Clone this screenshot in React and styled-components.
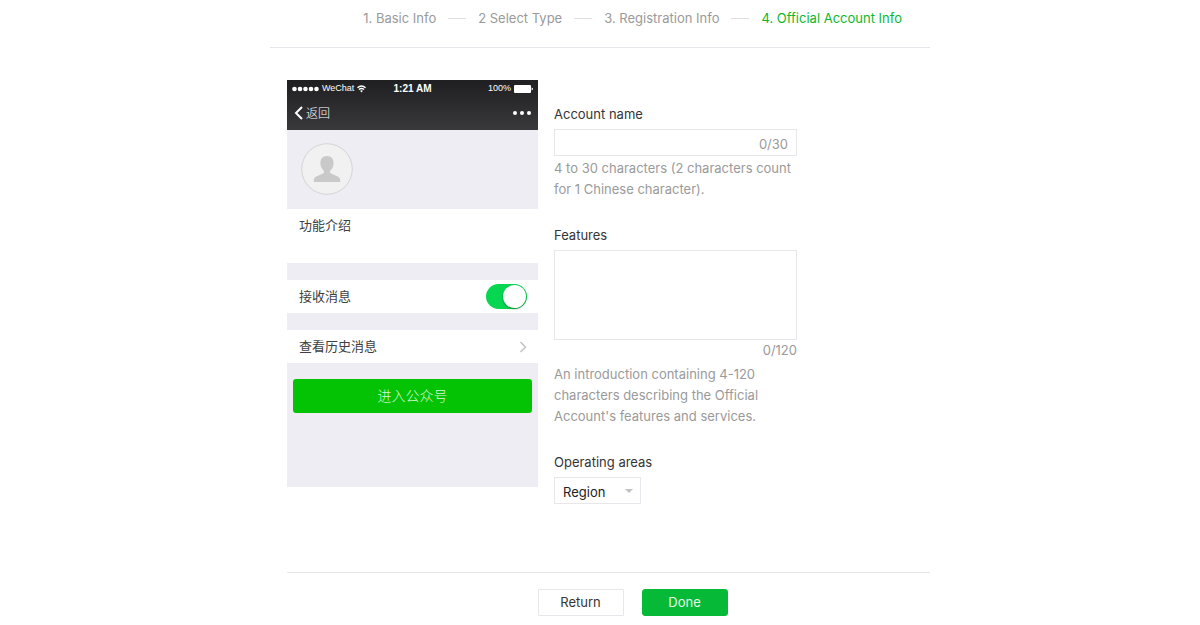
import React, { useState } from 'react';
import styled, { createGlobalStyle } from 'styled-components';

const GlobalStyle = createGlobalStyle`
	* {
		box-sizing: border-box;
	}

	body {
		margin: 0;
		background: #fff;
		color: #353535;
		font-family: Inter, "Noto Sans CJK SC", sans-serif;
		font-size: 13px;
		line-height: 21px;
	}

	button, input, textarea, select {
		font: inherit;
		color: inherit;
	}
`;

const Page = styled.main`
	max-width: 660px;
	margin: 0 auto;
`;

const Steps = styled.ol`
	display: flex;
	align-items: center;
	justify-content: flex-end;
	margin: 0;
	padding: 8px 28px 18px 0;
	border-bottom: 1px solid #e7e7eb;
	list-style: none;

	& li + li::before {
		content: '';
		width: 18px;
		margin: 0 12px;
		border-top: 1px solid #e0e0e0;
	}
`;

const Step = styled.li`
	display: flex;
	align-items: center;
	white-space: nowrap;
	color: ${props => (props.$active ? '#0cb72c' : '#9a9a9a')};
`;

const Content = styled.div`
	display: flex;
	align-items: flex-start;
	gap: 16px;
	padding: 32px 0 68px 17px;
`;

const Phone = styled.section`
	flex: none;
	width: 251px;
	padding-bottom: 74px;
	background: #eeedf4;
	color: #404040;
`;

const PhoneTop = styled.header`
	height: 50px;
	padding: 0 5px;
	background: linear-gradient(#1f1f21, #39393b);
	color: #fff;
`;

const StatusBar = styled.div`
	display: grid;
	grid-template-columns: 1fr auto 1fr;
	align-items: center;
	height: 17px;
	font-family: "Liberation Sans", Arial, sans-serif;
	font-size: 9px;
	line-height: 17px;
`;

const StatusGroup = styled.span`
	display: flex;
	align-items: center;
	justify-content: ${props => (props.$end ? 'flex-end' : 'flex-start')};
	gap: 3px;
`;

const Time = styled.strong`
	font-size: 10px;
`;

const NavBar = styled.div`
	display: flex;
	align-items: center;
	justify-content: space-between;
	height: 32px;
`;

const PlainButton = styled.button`
	display: flex;
	align-items: center;
	gap: 3px;
	padding: 0 2px;
	border: none;
	background: none;
	font-size: 12px;
	font-weight: 300;
`;

const Profile = styled.div`
	padding: 13px 14px 14px;

	& svg {
		display: block;
	}
`;

const Intro = styled.div`
	height: 54px;
	padding: 6px 12px;
	background: #fff;
`;

const PhoneRow = styled.label`
	display: flex;
	align-items: center;
	justify-content: space-between;
	height: 33px;
	margin-top: 17px;
	padding: 0 11px 0 12px;
	background: #fff;
`;

const Switch = styled.input`
	appearance: none;
	display: flex;
	justify-content: ${props => (props.checked ? 'flex-end' : 'flex-start')};
	width: 41px;
	height: 25px;
	margin: 0;
	padding: 1px;
	border-radius: 13px;
	background: ${props => (props.checked ? '#06d650' : '#ddd')};

	&::before {
		content: '';
		width: 23px;
		height: 23px;
		border-radius: 50%;
		background: #fff;
		box-shadow: 0 1px 2px rgba(0, 0, 0, 0.35);
	}
`;

const EnterButton = styled.button`
	display: block;
	width: calc(100% - 12px);
	height: 34px;
	margin: 16px 6px 0;
	padding: 0 0 2px;
	border: none;
	border-radius: 3px;
	background: #04c304;
	color: #d9f7d9;
	font-size: 14px;
	font-weight: 300;
`;

const Form = styled.form`
	display: flex;
	flex-direction: column;
	gap: 25px;
	flex: 0 1 243px;
	min-width: 0;
	padding-top: 24px;
`;

const Field = styled.div`
	display: flex;
	flex-direction: column;
	align-items: stretch;
`;

const Label = styled.label`
	margin-bottom: 4px;
`;

const InputBox = styled.div`
	display: flex;
	height: 27px;
	margin-bottom: 2px;
	padding: 4px 8px 0;
	border: 1px solid #e7e7eb;
`;

const TextInput = styled.input`
	flex: 1;
	min-width: 0;
	padding: 0;
	border: none;
	outline: none;
	background: none;
`;

const TextArea = styled.textarea`
	display: block;
	width: 100%;
	height: 90px;
	padding: 4px 8px;
	border: 1px solid #e7e7eb;
	outline: none;
	resize: none;
`;

const Counter = styled.output`
	color: #9a9a9a;
	text-align: right;
`;

const Hint = styled.p`
	margin: ${props => (props.$spaced ? '3px' : '0')} 0 0;
	color: #9a9a9a;
`;

const SelectBox = styled.div`
	display: grid;
	align-items: center;
	width: 87px;

	& > * {
		grid-area: 1 / 1;
	}

	& svg {
		justify-self: end;
		margin-right: 8px;
		pointer-events: none;
	}
`;

const Select = styled.select`
	appearance: none;
	height: 27px;
	padding: 4px 8px 0;
	border: 1px solid #e7e7eb;
	border-radius: 0;
	background: #fff;
	color: #222;
`;

const Footer = styled.footer`
	display: flex;
	justify-content: center;
	gap: 18px;
	margin-left: 17px;
	padding: 16px 0 10px 48px;
	border-top: 1px solid #e7e7eb;
`;

const Button = styled.button`
	width: 86px;
	height: 27px;
	padding: 0;
	border: 1px solid ${props => (props.$primary ? '#06b936' : '#e7e7eb')};
	border-radius: ${props => (props.$primary ? '3px' : '1px')};
	background: ${props => (props.$primary ? '#06b936' : '#fff')};
	color: ${props => (props.$primary ? '#e4fbe8' : '#353535')};
`;

const steps = ['1. Basic Info', '2 Select Type', '3. Registration Info', '4. Official Account Info'];

const SignalIcon = () => (
	<svg width="27" height="6" viewBox="0 0 27 6" fill="#fff">
		{[2.5, 8, 13.5, 19, 24.5].map(x => <circle key={x} cx={x} cy="3" r="2.3" />)}
	</svg>
);

const WifiIcon = () => (
	<svg width="9" height="8" viewBox="0 0 9 8" fill="none" stroke="#fff" strokeWidth="1.3">
		<path d="M0.4 2.8Q4.5-0.8 8.6 2.8M1.9 4.6Q4.5 2.3 7.1 4.6" />
		<path d="M3.1 5.7Q4.5 4.7 5.9 5.7L4.5 7.4Z" fill="#fff" stroke="none" />
	</svg>
);

const BatteryIcon = () => (
	<svg width="19" height="8" viewBox="0 0 19 8" fill="#fff">
		<rect width="17" height="8" rx="1" />
		<path d="M17.6 2.6Q19 3 19 4T17.6 5.4Z" />
	</svg>
);

const BackIcon = () => (
	<svg width="9" height="14" viewBox="0 0 9 14" fill="none" stroke="#fff" strokeWidth="2">
		<path d="M8 1L2 7L8 13" />
	</svg>
);

const MoreIcon = () => (
	<svg width="18" height="4" viewBox="0 0 18 4" fill="#fff">
		<circle cx="2" cy="2" r="2" />
		<circle cx="9" cy="2" r="2" />
		<circle cx="16" cy="2" r="2" />
	</svg>
);

const Avatar = () => (
	<svg width="52" height="52" viewBox="0 0 52 52">
		<circle cx="26" cy="26" r="25.3" fill="#f1f1f1" stroke="#d4d4d6" />
		<path
			d="M26 13C21.6 13 19.4 16 19.4 20C19.4 23 20.6 25.6 22.6 27.4C23.4 28.4 23 30 21.8 30.6L14.8 33.8C13.2 34.6 12.8 36.2 12.8 39H39.2C39.2 36.2 38.8 34.6 37.2 33.8L30.2 30.6C29 30 28.6 28.4 29.4 27.4C31.4 25.6 32.6 23 32.6 20C32.6 16 30.4 13 26 13Z"
			fill="#c9c9c9"
		/>
	</svg>
);

const ChevronIcon = () => (
	<svg width="8" height="12" viewBox="0 0 8 12" fill="none" stroke="#c2c2c6" strokeWidth="1.5">
		<path d="M1.5 1L6.5 6L1.5 11" />
	</svg>
);

const PhonePreview = () => {
	const [receive, setReceive] = useState(true);

	return (
		<Phone>
			<PhoneTop>
				<StatusBar>
					<StatusGroup>
						<SignalIcon />
						WeChat
						<WifiIcon />
					</StatusGroup>
					<Time>1:21 AM</Time>
					<StatusGroup $end>
						100%
						<BatteryIcon />
					</StatusGroup>
				</StatusBar>
				<NavBar>
					<PlainButton type="button"><BackIcon />返回</PlainButton>
					<PlainButton type="button" aria-label="More"><MoreIcon /></PlainButton>
				</NavBar>
			</PhoneTop>
			<Profile><Avatar /></Profile>
			<Intro>功能介绍</Intro>
			<PhoneRow>
				接收消息
				<Switch type="checkbox" checked={receive} onChange={e => setReceive(e.target.checked)} />
			</PhoneRow>
			<PhoneRow as="div">
				查看历史消息
				<ChevronIcon />
			</PhoneRow>
			<EnterButton type="button">进入公众号</EnterButton>
		</Phone>
	);
};

const App = () => {
	const [name, setName] = useState('');
	const [features, setFeatures] = useState('');

	return (
		<Page>
			<GlobalStyle />
			<Steps>
				{steps.map((step, i) => (
					<Step key={step} $active={i === 3}>{step}</Step>
				))}
			</Steps>
			<Content>
				<PhonePreview />
				<Form id="account">
					<Field>
						<Label htmlFor="name">Account name</Label>
						<InputBox>
							<TextInput id="name" maxLength={30} value={name} onChange={e => setName(e.target.value)} />
							<Counter htmlFor="name">{name.length}/30</Counter>
						</InputBox>
						<Hint>4 to 30 characters (2 characters count for 1 Chinese character).</Hint>
					</Field>
					<Field>
						<Label htmlFor="features">Features</Label>
						<TextArea id="features" maxLength={120} value={features} onChange={e => setFeatures(e.target.value)} />
						<Counter htmlFor="features">{features.length}/120</Counter>
						<Hint $spaced>
							An introduction containing 4-120 characters describing the Official Account's features and services.
						</Hint>
					</Field>
					<Field>
						<Label htmlFor="region">Operating areas</Label>
						<SelectBox>
							<Select id="region">
								<option>Region</option>
							</Select>
							<svg width="8" height="4" viewBox="0 0 8 4" fill="#c2c2c2"><path d="M0 0H8L4 4Z" /></svg>
						</SelectBox>
					</Field>
				</Form>
			</Content>
			<Footer>
				<Button type="button">Return</Button>
				<Button type="submit" form="account" $primary>Done</Button>
			</Footer>
		</Page>
	);
};

export default App;
